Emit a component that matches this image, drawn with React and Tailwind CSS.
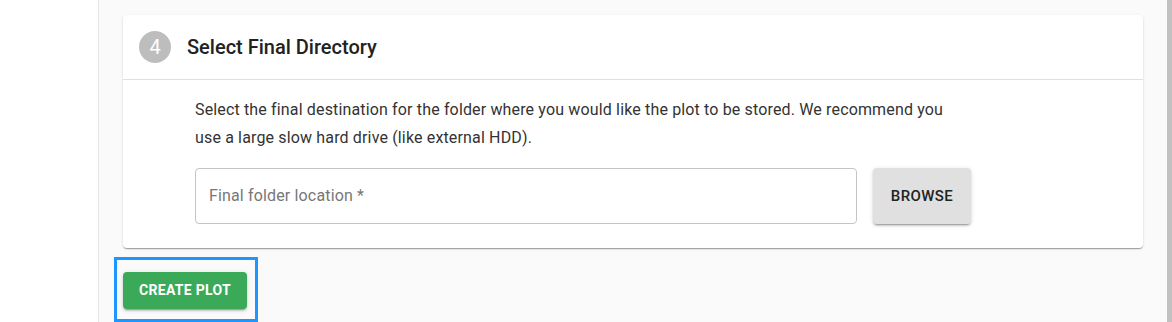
export default function App() {
  return (
    <div
      className="flex h-[322px] w-[1172px] overflow-hidden bg-white"
      style={{ fontFamily: 'Roboto, "Liberation Sans", sans-serif' }}
    >
      <div className="w-[98px] shrink-0 bg-white" />
      <div className="w-px shrink-0 bg-[#e6e6e6]" />
      <div className="flex flex-1 flex-col bg-[#fafafa] pl-6 pr-[24px] pt-[15px]">
        <div className="rounded-[4px] bg-white shadow-[0_2px_1px_-1px_rgba(0,0,0,0.2),0_1px_1px_0_rgba(0,0,0,0.14),0_1px_3px_0_rgba(0,0,0,0.12)]">
          <div className="flex h-[65px] items-center gap-4 border-b border-[#e0e0e0] px-4">
            <div className="flex h-8 w-8 items-center justify-center rounded-full bg-[#bdbdbd] text-[20px] text-white">
              4
            </div>
            <div className="text-[20px] font-medium text-[#222]">Select Final Directory</div>
          </div>
          <div className="pl-[72px] pr-6 pb-6 pt-[16px]">
            <p className="w-[760px] text-[16px] leading-[28px] tracking-[0.15px] text-[#333]">
              Select the final destination for the folder where you would like the plot to be stored. We recommend you use a large slow hard drive (like external HDD).
            </p>
            <div className="mt-[16px] flex items-center gap-4">
              <div className="flex h-[56px] w-[662px] items-center rounded-[4px] border border-[#c4c4c4] px-[13px] text-[16px] tracking-[0.15px] text-[#777]">
                Final folder location *
              </div>
              <button className="h-[56px] w-[98px] rounded-[4px] bg-[#e0e0e0] text-[15px] font-medium tracking-[0.4px] text-[#222] shadow-[0_3px_1px_-2px_rgba(0,0,0,0.2),0_2px_2px_0_rgba(0,0,0,0.14),0_1px_5px_0_rgba(0,0,0,0.12)]">
                BROWSE
              </button>
            </div>
          </div>
        </div>
        <div className="mt-[9px] flex">
          <div className="ml-[-9px] border-[3px] border-[#1e96ff] pb-[10px] pl-[6px] pr-[8px] pt-[12px]">
            <button className="h-[37px] w-[124px] rounded-[4px] bg-[#3aaa59] text-[14px] font-bold tracking-[0.3px] text-white shadow-[0_3px_1px_-2px_rgba(0,0,0,0.2),0_2px_2px_0_rgba(0,0,0,0.14),0_1px_5px_0_rgba(0,0,0,0.12)]">
              CREATE PLOT
            </button>
          </div>
        </div>
      </div>
      <div className="w-[5px] shrink-0 bg-[#c1c1c1]" />
    </div>
  );
}
